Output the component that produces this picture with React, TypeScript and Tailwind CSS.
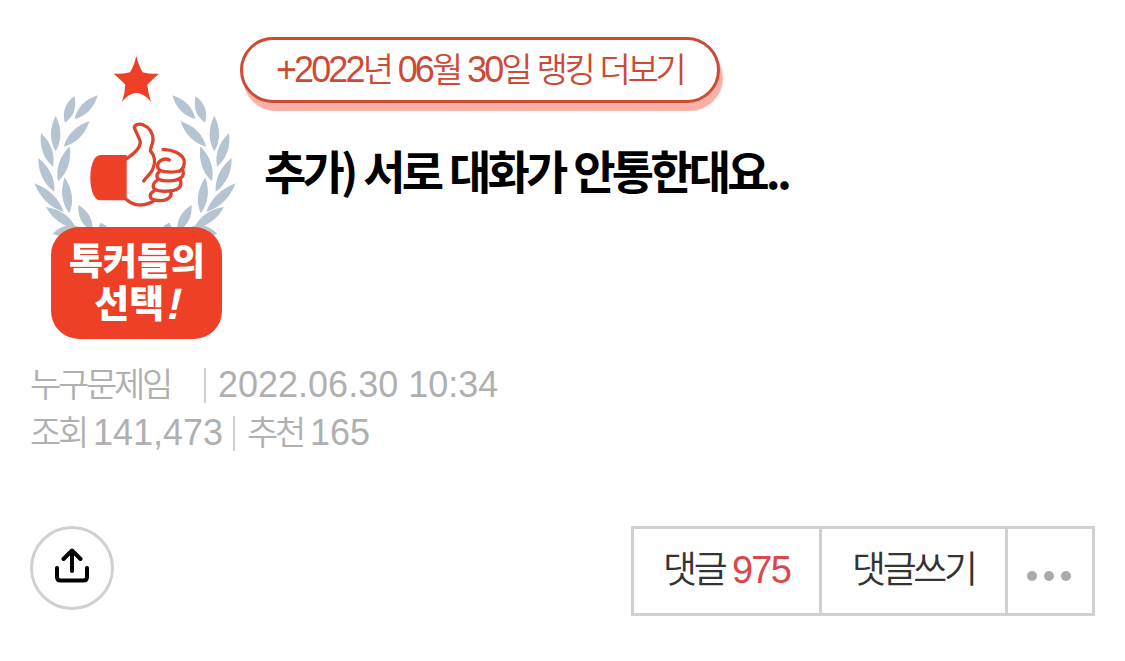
import React from 'react';

const leaves = [
  [233, 166, 164, 237],
  [163, 168, 135, 248],
  [209, 243, 131, 320],
  [107, 227, 107, 334],
  [63, 279, 99, 380],
  [149, 319, 114, 424],
  [55, 354, 103, 455],
  [134, 412, 148, 520],
  [43, 430, 131, 516],
  [78, 501, 168, 564],
  [175, 495, 217, 574],
  [98, 582, 178, 562],
  [242, 548, 256, 590],
];

function leafPath([x1, y1, x2, y2]: number[]) {
  const dx = x2 - x1;
  const dy = y2 - y1;
  const len = Math.hypot(dx, dy);
  const nx = (-dy / len) * 19;
  const ny = (dx / len) * 19;
  const at = (t: number, side: number) => `${x1 + dx * t + nx * side} ${y1 + dy * t + ny * side}`;
  return `M${x1} ${y1}C${at(0.35, 1)} ${at(0.7, 1)} ${x2} ${y2}C${at(0.7, -1)} ${at(0.35, -1)} ${x1} ${y1}Z`;
}

function Laurel() {
  return (
    <g fill="#b6c3d1">
      {leaves.map((leaf, idx) => (
        <path key={idx} d={leafPath(leaf)} />
      ))}
    </g>
  );
}

function Emblem() {
  return (
    <div className="w-[220px] shrink-0 pt-10">
      <svg viewBox="0 0 660 561" className="block w-[220px] h-[187px] overflow-visible">
        <Laurel />
        <g transform="translate(690 0) scale(-1 1)">
          <Laurel />
        </g>
        <path
          fill="#ee4026"
          d="M349 48Q356 78 368 97Q392 103 417 101Q398 117 382 134Q384 160 393 185Q371 159 349 158Q327 159 306 185Q315 160 316 134Q300 117 281 101Q306 103 330 97Q342 78 349 48Z"
        />
        <g transform="translate(180 210)">
          <path fill="#ee4026" d="M62 135H140V271H62C40 271 31 235 31 203C31 170 40 135 62 135Z" />
          <g fill="none" stroke="#dc4430" strokeWidth="10" strokeLinecap="round" strokeLinejoin="round">
            <path d="M140 146C160 133 180 115 181 98C181 85 165 64 163 52C165 42 180 40 190 45C208 52 220 70 219 90C218 102 213 110 211 122C224 137 228 157 218 178C212 192 200 200 191 213" />
            <path d="M140 269C155 284 180 290 206 280C214 278 218 275 223 271" />
            <path d="M249 118C277 119 305 130 312 150C316 165 308 178 300 183" />
            <path d="M268 150C255 143 238 150 233 163C231 178 240 184 255 185C275 187 300 188 308 176" />
            <path d="M240 183C225 195 228 210 250 212C275 214 300 210 308 198C312 190 309 182 305 178" />
            <path d="M232 210C215 222 215 238 235 242C260 246 290 243 300 230C304 220 303 213 300 207" />
            <path d="M222 243C205 252 208 268 225 270C245 274 262 272 272 258C275 252 273 247 271 243" />
          </g>
        </g>
      </svg>
      <div className="relative ml-[31px] w-[171px] h-[112px] rounded-[28px] bg-[#ee4026] pt-[15px] text-center text-white font-black text-[37px] leading-[42px] whitespace-nowrap">
        <div className="h-[41px] pl-px">톡커들의</div>
        <div className="flex h-[42px] items-center justify-center pl-1 text-[38px]">
          선택<span className="ml-1 -skew-x-12 text-[44px] leading-[42px]">!</span>
        </div>
      </div>
    </div>
  );
}

function Ko({ children }: { children: React.ReactNode }) {
  return <span className="text-[34px] font-[350] tracking-[-3.3px]">{children}</span>;
}

function Divider() {
  return <span className="w-[2px] h-[35px] bg-[#d0d0d0]" />;
}

export default function App() {
  return (
    <div className="w-[1125px] h-[661px] overflow-hidden bg-white font-['Liberation_Sans','Noto_Sans_CJK_KR',sans-serif]">
      <header className="flex h-[339px] pl-5">
        <Emblem />
        <div className="pt-[37px]">
          <a className="flex w-[480px] h-[66px] items-center rounded-full border-3 border-[#cc4a36] bg-white pl-[33px] text-[36px] leading-[60px] tracking-[-2.9px] whitespace-nowrap text-[#cc4a36] shadow-[3px_8px_1px_#f9b0a8]">
            <span>
              +2022<Ko>년</Ko> 06<Ko>월</Ko> 30<Ko>일</Ko> <Ko>랭킹</Ko> <Ko>더보기</Ko>
            </span>
          </a>
          <h1 className="mt-[33px] ml-6 font-['Noto_Sans_CJK_KR',sans-serif] text-[46px] leading-[66px] font-bold tracking-[-3.8px] [word-spacing:2px] whitespace-nowrap text-black">
            추가) 서로 대화가 안통한대요..
          </h1>
        </div>
      </header>

      <section className="mt-[22px] pl-[30px] text-[36px] leading-[48px] whitespace-nowrap text-[#b0b0b0]">
        <div className="flex h-12 items-center">
          <span className="w-[174px]"><Ko>누구문제임</Ko></span>
          <Divider />
          <span className="ml-3">2022.06.30 10:34</span>
        </div>
        <div className="flex h-12 items-center">
          <span className="w-[63px]"><Ko>조회</Ko></span>
          <span className="w-[140px]">141,473</span>
          <Divider />
          <span className="ml-3 w-[63px]"><Ko>추천</Ko></span>
          <span>165</span>
        </div>
      </section>

      <footer className="mt-[69px] flex items-start justify-between px-[30px]">
        <button className="flex size-[84px] items-center justify-center rounded-full border-3 border-[#d0d0d0]">
          <svg viewBox="0 0 40 40" className="size-10" fill="none" stroke="#000" strokeWidth="4" strokeLinecap="round" strokeLinejoin="round">
            <path d="M5 20V29Q5 32.5 8.500 32.500H31.500Q35 32.500 35 29V20" />
            <path d="M20 23V3M11.500 11L20 2.500L28.500 11" />
          </svg>
        </button>
        <div className="flex w-[464px] h-[90px] border-3 border-[#d0d0d0] text-[38px] leading-[84px] whitespace-nowrap text-[#333]">
          <button className="flex w-[188px] border-r-3 border-[#d0d0d0] pl-[29px]">
            <span className="w-[69px] text-left text-[37px] font-[350] tracking-[-3.4px]">댓글</span>
            <span className="-mt-px tracking-[-1.8px] text-[#d9474a]">975</span>
          </button>
          <button className="w-[186px] border-r-3 border-[#d0d0d0] pl-[30px] text-left text-[37px] font-[350] tracking-[-3.4px]">
            댓글쓰기
          </button>
          <button className="flex flex-1 items-center justify-center gap-[7px] pt-[9px] pr-[3px]">
            <span className="size-[10px] rounded-full bg-[#aaa]" />
            <span className="size-[10px] rounded-full bg-[#aaa]" />
            <span className="size-[10px] rounded-full bg-[#aaa]" />
          </button>
        </div>
      </footer>
    </div>
  );
}
